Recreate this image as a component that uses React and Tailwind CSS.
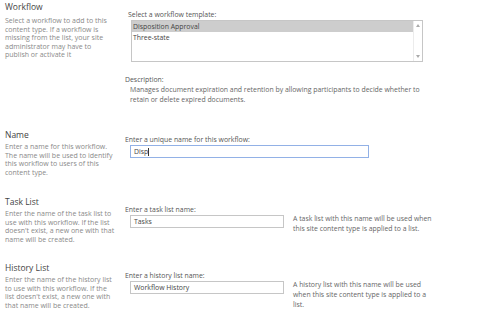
export default function App() {
  const font = { fontFamily: '"Open Sans", "Noto Sans", sans-serif' };
  const Lines = ({ lines, className }) => (
    <div className={className}>
      {lines.map((l, i) => (
        <div key={i} className="whitespace-nowrap">{l}</div>
      ))}
    </div>
  );
  const leftDesc = "text-[7px] leading-[8.7px] text-[#8a8a8a] mt-[3px]";
  const heading = "text-[8.5px] leading-[11px] text-[#444]";
  const label = "text-[6.9px] leading-[10px] text-[#555]";
  const help = "text-[6.9px] leading-[10px] text-[#666]";
  return (
    <div className="w-[500px] h-[330px] bg-white overflow-hidden" style={font}>
      {/* Workflow */}
      <div className="flex h-[125px]">
        <div className="w-[125px] pl-[5px] pt-[1px]">
          <div className={heading}>Workflow</div>
          <Lines
            className="text-[7px] leading-[8.6px] text-[#8a8a8a] mt-[5px]"
            lines={[
              "Select a workflow to add to this",
              "content type. If a workflow is",
              "missing from the list, your site",
              "administrator may have to",
              "publish or activate it",
            ]}
          />
        </div>
        <div className="pt-[10px]">
          <div className={label + " pl-[3px]"}>Select a workflow template:</div>
          <div className="ml-[6px] w-[292px] h-[42px] border border-[#c6c6c6] flex">
            <div className="flex-1 text-[6.9px] leading-[10px] text-[#444]">
              <div className="bg-[#cdcdcd] pl-[1px] h-[11px] leading-[11px]">Disposition Approval</div>
              <div className="pl-[1px] mt-[1px]">Three-state</div>
            </div>
            <div className="w-[9px] bg-white border-l border-[#ececec] flex flex-col items-center justify-between py-[3px]">
              <svg width="4" height="3" viewBox="0 0 4 3"><path d="M0 3 L2 0 L4 3 Z" fill="#aaa" /></svg>
              <svg width="4" height="3" viewBox="0 0 4 3"><path d="M0 0 L2 3 L4 0 Z" fill="#aaa" /></svg>
            </div>
          </div>
          <div className={label + " mt-[13px]"}>Description:</div>
          <Lines
            className={help + " pl-[5px]"}
            lines={[
              "Manages document expiration and retention by allowing participants to decide whether to",
              "retain or delete expired documents.",
            ]}
          />
        </div>
      </div>
      {/* Name */}
      <div className="flex h-[66px]">
        <div className="w-[125px] pl-[5px] pt-[4px]">
          <div className={heading}>Name</div>
          <Lines
            className={leftDesc}
            lines={[
              "Enter a name for this workflow.",
              "The name will be used to identify",
              "this workflow to users of this",
              "content type.",
            ]}
          />
        </div>
        <div className="pt-[10px]">
          <div className={label}>Enter a unique name for this workflow:</div>
          <div className="ml-[5px] w-[239px] h-[13px] border border-[#92b1e6] text-[6.9px] leading-[11px] text-[#444] pl-[3px] flex items-center">
            <span>Disp</span>
            <span className="w-px h-[8px] bg-[#333]" />
          </div>
        </div>
      </div>
      {/* Task List */}
      <div className="flex h-[67px]">
        <div className="w-[125px] pl-[5px] pt-[5px]">
          <div className={heading}>Task List</div>
          <Lines
            className={leftDesc}
            lines={[
              "Enter the name of the task list to",
              "use with this workflow. If the list",
              "doesn't exist, a new one with that",
              "name will be created.",
            ]}
          />
        </div>
        <div className="pt-[14px]">
          <div className={label}>Enter a task list name:</div>
          <div className="flex">
            <div className="ml-[5px] w-[154px] h-[13px] border border-[#c6c6c6] text-[6.9px] leading-[11px] text-[#444] pl-[3px] flex items-center">
              Tasks
            </div>
            <Lines
              className={help + " ml-[9px] mt-[-1px]"}
              lines={[
                "A task list with this name will be used when",
                "this site content type is applied to a list.",
              ]}
            />
          </div>
        </div>
      </div>
      {/* History List */}
      <div className="flex h-[72px]">
        <div className="w-[125px] pl-[5px] pt-[4px]">
          <div className={heading}>History List</div>
          <Lines
            className={leftDesc}
            lines={[
              "Enter the name of the history list",
              "to use with this workflow. If the",
              "list doesn't exist, a new one with",
              "that name will be created.",
            ]}
          />
        </div>
        <div className="pt-[13px]">
          <div className={label}>Enter a history list name:</div>
          <div className="flex">
            <div className="ml-[5px] w-[154px] h-[13px] border border-[#c6c6c6] text-[6.9px] leading-[11px] text-[#444] pl-[3px] flex items-center">
              Workflow History
            </div>
            <Lines
              className={help + " ml-[9px] mt-[-1px]"}
              lines={[
                "A history list with this name will be used",
                "when this site content type is applied to a",
                "list.",
              ]}
            />
          </div>
        </div>
      </div>
    </div>
  );
}
